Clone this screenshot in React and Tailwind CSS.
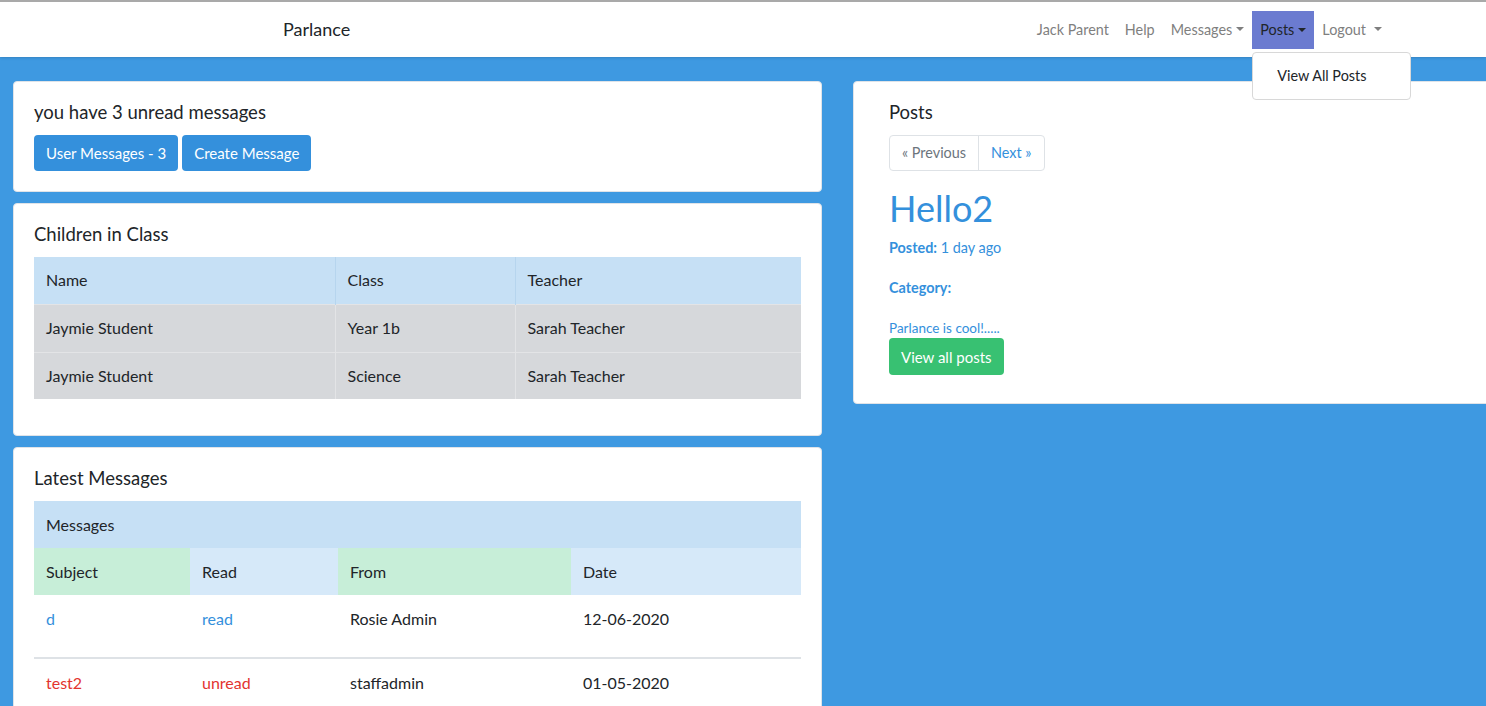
export default function App() {
  return (
    <div className="min-h-screen bg-[#3e99e1] overflow-hidden font-['Lato',sans-serif] text-[#212529]">
      {/* Navbar */}
      <nav className="h-[57px] bg-white border-t-2 border-[#a9a9a9] shadow-sm flex items-center relative">
        <div className="pl-[283px] text-[18px] text-[#212529]">Parlance</div>
        <ul className="ml-auto mr-[96px] flex items-center text-[14.4px] text-[#7f7f7f]">
          <li className="px-2">Jack Parent</li>
          <li className="px-2">Help</li>
          <li className="px-2 flex items-center">
            Messages <span className="ml-1 border-x-4 border-x-transparent border-t-4 border-t-[#7f7f7f]" />
          </li>
          <li className="relative">
            <div className="h-[38px] px-2 bg-[#6b7bd0] text-[#212529] flex items-center">
              Posts <span className="ml-1 border-x-4 border-x-transparent border-t-4 border-t-[#212529]" />
            </div>
            <div className="absolute left-0 top-[41px] w-[159px] h-[48px] bg-white border border-[#d8d8d8] rounded z-10 flex items-center pl-6 text-[#212529]">
              View All Posts
            </div>
          </li>
          <li className="px-2 flex items-center">
            Logout <span className="ml-2 border-x-4 border-x-transparent border-t-4 border-t-[#7f7f7f]" />
          </li>
        </ul>
      </nav>

      {/* Content */}
      <main className="flex items-start gap-[31px] pt-[24px] pl-[13px]">
        {/* Left column */}
        <div className="w-[809px] flex flex-col gap-[11px] shrink-0">
          <div className="bg-white rounded border border-[#dfe3e8] p-5">
            <h5 className="text-[18.5px] leading-[21px] mb-3">you have 3 unread messages</h5>
            <div className="flex gap-1">
              <button className="h-[36px] px-3 bg-[#3490dc] text-white rounded text-[15px]">User Messages - 3</button>
              <button className="h-[36px] px-3 bg-[#3490dc] text-white rounded text-[15px]">Create Message</button>
            </div>
          </div>

          <div className="bg-white rounded border border-[#dfe3e8] p-5">
            <h5 className="text-[18.5px] leading-[21px] mb-3">Children in Class</h5>
            <table className="w-full text-[16px] mb-4 border-collapse">
              <thead>
                <tr className="bg-[#c6e0f5] h-[47px]">
                  <th className="font-normal text-left px-3 w-[301px] border-r border-[#b6d5ee]">Name</th>
                  <th className="font-normal text-left px-3 w-[180px] border-r border-[#b6d5ee]">Class</th>
                  <th className="font-normal text-left px-3">Teacher</th>
                </tr>
              </thead>
              <tbody className="bg-[#d6d8db]">
                <tr className="h-[48px] border-t border-[#e3e4e6]">
                  <td className="px-3 border-r border-[#e3e4e6]">Jaymie Student</td>
                  <td className="px-3 border-r border-[#e3e4e6]">Year 1b</td>
                  <td className="px-3">Sarah Teacher</td>
                </tr>
                <tr className="h-[47px] border-t border-[#e3e4e6]">
                  <td className="px-3 border-r border-[#e3e4e6]">Jaymie Student</td>
                  <td className="px-3 border-r border-[#e3e4e6]">Science</td>
                  <td className="px-3">Sarah Teacher</td>
                </tr>
              </tbody>
            </table>
          </div>

          <div className="bg-white rounded border border-[#dfe3e8] px-5 pt-5 h-[300px]">
            <h5 className="text-[18.5px] leading-[21px] mb-3">Latest Messages</h5>
            <table className="w-full text-[16px] border-collapse">
              <thead>
                <tr className="bg-[#c6e0f5] h-[47px]">
                  <th colSpan={4} className="font-normal text-left px-3">Messages</th>
                </tr>
                <tr className="h-[47px]">
                  <th className="font-normal text-left px-3 w-[156px] bg-[#c7eed8]">Subject</th>
                  <th className="font-normal text-left px-3 w-[148px] bg-[#d6e9f9]">Read</th>
                  <th className="font-normal text-left px-3 w-[233px] bg-[#c7eed8]">From</th>
                  <th className="font-normal text-left px-3 bg-[#d6e9f9]">Date</th>
                </tr>
              </thead>
              <tbody>
                <tr className="h-[63px] border-b-2 border-[#dee2e6]">
                  <td className="px-3 text-[#3490dc] align-top pt-[12px]">d</td>
                  <td className="px-3 text-[#3490dc] align-top pt-[12px]">read</td>
                  <td className="px-3 align-top pt-[12px]">Rosie Admin</td>
                  <td className="px-3 align-top pt-[12px]">12-06-2020</td>
                </tr>
                <tr className="h-[48px]">
                  <td className="px-3 text-[#e3342f]">test2</td>
                  <td className="px-3 text-[#e3342f]">unread</td>
                  <td className="px-3">staffadmin</td>
                  <td className="px-3">01-05-2020</td>
                </tr>
              </tbody>
            </table>
          </div>
        </div>

        {/* Right column */}
        <div className="w-[700px] shrink-0 bg-white rounded border border-[#dfe3e8] pl-[35px] pt-5 pb-[28px]">
          <h5 className="text-[18.5px] leading-[21px] mb-3">Posts</h5>
          <div className="inline-flex border border-[#dee2e6] rounded text-[14.4px] h-[36px]">
            <span className="px-3 flex items-center text-[#6c757d] border-r border-[#dee2e6]">« Previous</span>
            <span className="px-3 flex items-center text-[#3490dc]">Next »</span>
          </div>
          <h1 className="text-[36px] leading-[43px] text-[#3490dc] mt-4 mb-[7px]">Hello2</h1>
          <p className="text-[14.4px] text-[#3490dc] mb-[18px]">
            <b className="font-bold">Posted:</b> 1 day ago
          </p>
          <p className="text-[14.4px] text-[#3490dc] font-bold mb-5">Category:</p>
          <p className="text-[13.5px] text-[#3490dc]">Parlance is cool!.....</p>
          <button className="h-[37px] px-3 bg-[#38c172] text-white rounded text-[15px]">View all posts</button>
        </div>
      </main>
    </div>
  );
}
